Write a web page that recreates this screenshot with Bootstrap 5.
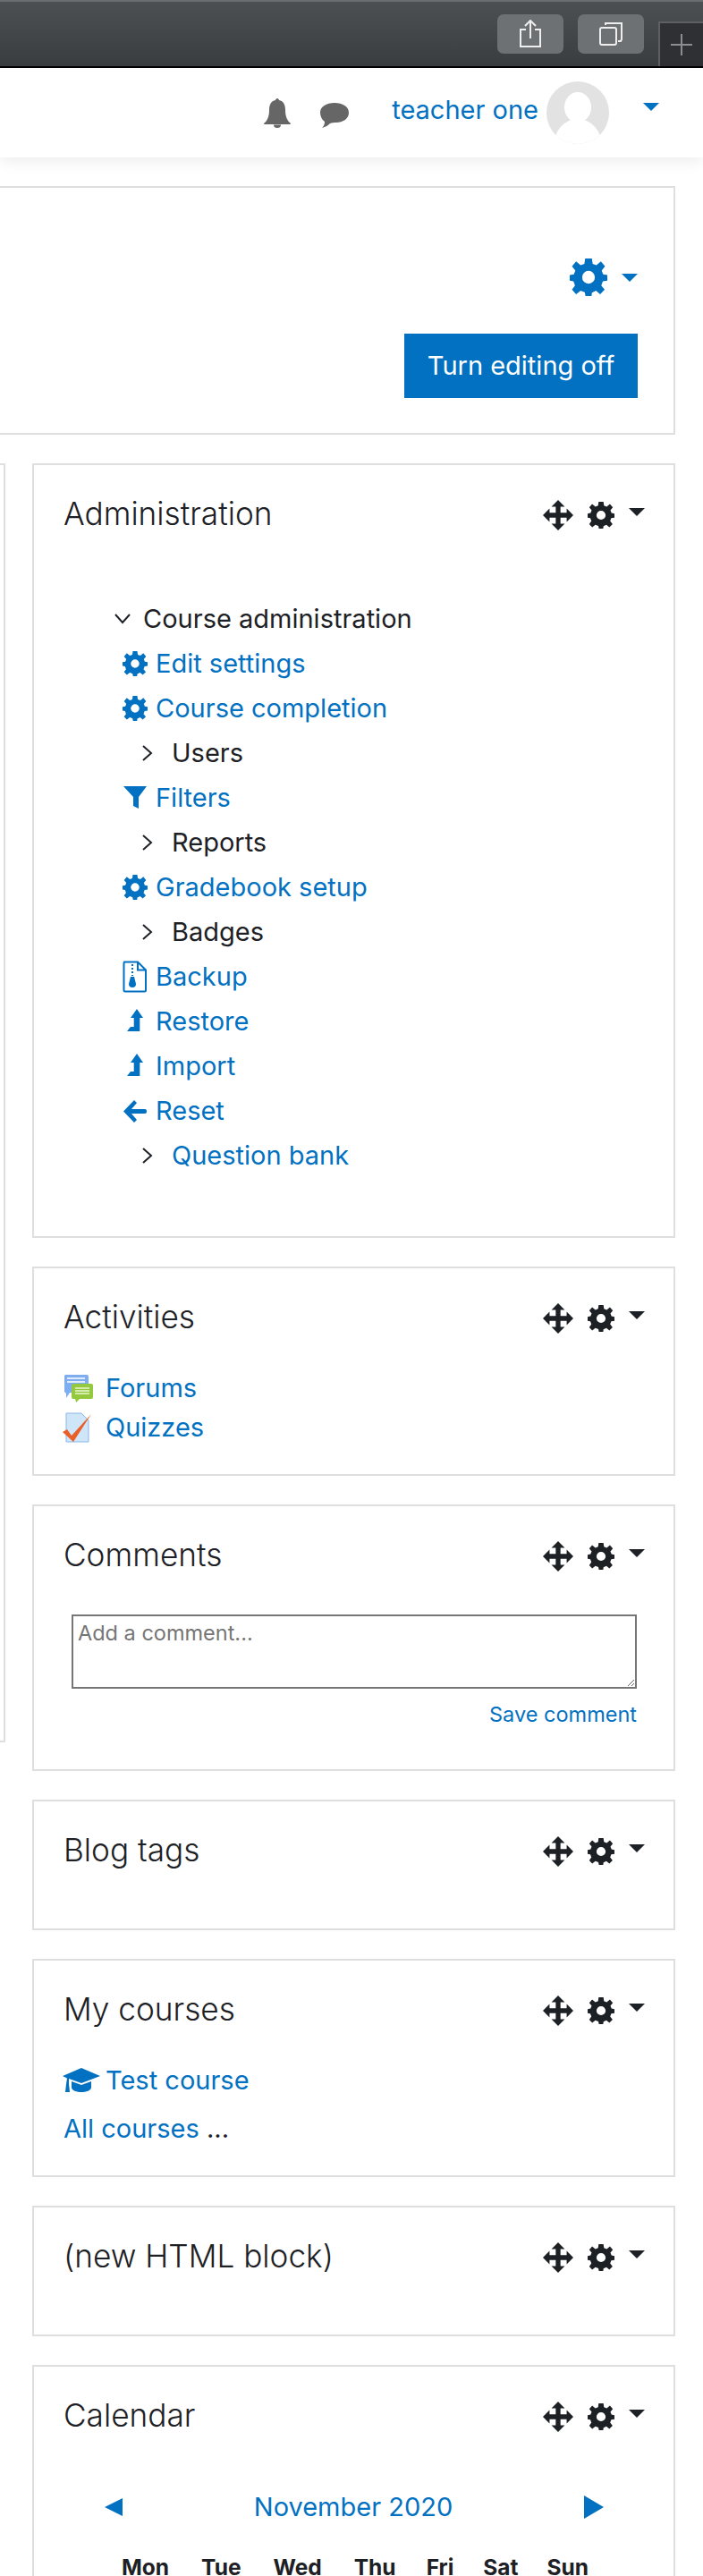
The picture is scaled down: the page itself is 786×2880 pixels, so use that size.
<!DOCTYPE html>
<html lang="en"><head><meta charset="utf-8"><title>Course</title>
<link href="https://cdn.jsdelivr.net/npm/bootstrap@5.3.0/dist/css/bootstrap.min.css" rel="stylesheet">
<style>
html,body{height:2880px;overflow:hidden;background:#fff}
body{font-family:Inter,"Noto Sans",sans-serif;font-size:29px;line-height:1.5;color:#1d2125}
a{color:#0271c1;text-decoration:none}
.topbar{height:76px;background:linear-gradient(#4c5052,#3a3d40);border-top:2px solid #6a6d6f;border-bottom:2px solid #000;padding-top:14px;gap:16px}
.tbtn{width:74px;height:44px;border-radius:7px;background:#6e7173}
.tbtn svg{width:32px;height:32px}
.ntab{width:50px;height:50px;margin-top:8px;background:#2e3033;border:2px solid #5d6062;border-right:0;border-bottom:0}
.unav{height:100px;box-shadow:0 4px 16px rgba(0,0,0,.08);padding-right:49px}
.bell{width:30px;height:33px;color:#666}
.chat{width:32px;height:28px;color:#666;margin-left:33px;margin-top:5px}
.uname{margin-left:48px;margin-bottom:6px}
.avatar{width:70px;height:70px;margin-left:9px}
.cr{width:0;height:0;border-left:9px solid transparent;border-right:9px solid transparent;border-top:9px solid currentColor;display:inline-block}
.crblue{color:#0271c1}
.ucr{margin-left:38px;margin-bottom:14px}
.bord{border:2px solid #dfdfdf}
.headbox{margin:32px 31px 0 -4px;height:278px;padding:79px 40px 0 0}
.gearb{width:42px;height:42px;color:#0271c1}
.mbtn{background:#0271c1;color:#fff;width:261px;height:72px;border:0;border-radius:0;font-size:29px;padding:0;margin-top:42px}
.mbtn:hover{background:#0271c1;color:#fff}
.sliver{width:6px;height:1430px;border-left:0;flex:none}
.blockcol{margin-left:30px;width:719px;flex:none}
.blk{margin-bottom:32px;padding:0 32px 0 33px}
.h-adm{height:866px}.h-act{height:234px}.h-com{height:298px}.h-emp{height:146px}.h-my{height:244px}.h-cal{height:300px}
.blk h5{font-size:35.2px;font-weight:300;line-height:40px;margin:0 0 4px}
.bhead{padding-top:34px}
.bctl{width:116px;height:34px;color:#1d2125}
.bctl .mv{width:34px;height:34px;margin-left:2px}
.bctl .gr{width:30px;height:30px;margin-left:16px}
.bctl .cr{margin-left:16px;margin-top:-8px}
.tree{list-style:none;margin:69px 0 0;padding:0;line-height:50px;white-space:nowrap}
.tree li{height:50px}
.tree svg{vertical-align:middle;overflow:visible}
.lv0{padding-left:56px}
.lv1{padding-left:66px}
.lv1 svg{width:28px;height:28px;margin-right:9px;margin-top:-4px;color:#0271c1}
.lv2{padding-left:87px}
.chev{width:14px;height:20px;margin-right:20px;margin-top:-4px}
.lv0 .chev{width:20px;height:14px;margin-right:13px}
.act{line-height:44px;height:44px}
.act svg{width:34px;height:34px;margin-right:14px;margin-left:-1px;vertical-align:middle;margin-top:-4px}
.act svg.capi{width:42px;height:28px;margin-right:6px}
.afirst{margin-top:34px}
.asecond{margin-top:10px}
.ta{width:632px;height:83px;border:2px solid #767676;margin:43px 0 0 9px;padding:5px;font-size:23.5px;line-height:28px;color:#777;font-family:inherit;display:block;resize:both}
.save{font-size:23.5px;line-height:30px;width:632px;margin:14px 0 0 9px}
.calh{height:40px;padding:0 46px 0 46px;margin-top:59px}
.wk{font-weight:700;font-size:24.500px;line-height:40px;margin-top:27px;padding-left:65px;gap:36px}
.wk span:nth-child(5){margin-left:-2px}
.wk span:nth-child(6){margin-left:-3px}
.wk span:nth-child(7){margin-left:-4px}
</style></head><body>
<svg width="0" height="0" class="d-block position-absolute"><defs>
<symbol id="gear" viewBox="-50 -50 100 100"><path fill-rule="evenodd" d="M-9-50H9L11-36 21-32 33-42 44-29 35-18 39-8 50-6V9L38 11 34 22 43 33 31 45 20 36 9 41 8 50H-8L-10 40-21 36-33 45-44 33-36 22-40 11-50 9V-6L-39-8-35-18-44-29-33-42-21-32-11-36ZM0-17A17 17 0 1 0 0 17 17 17 0 1 0 0-17Z"/></symbol>
<symbol id="move" viewBox="0 0 32 32"><path d="M16 0l7 7h-4.500v6.500H25V9l7 7-7 7v-4.500h-6.500V25H23l-7 7-7-7h4.500v-6.500H7V23l-7-7 7-7v4.500h6.500V7H9z"/></symbol>
<symbol id="up" viewBox="0 0 28 28"><path d="M16 0L23 10H19.300V25H5L9 20H12.700V10H9z"/></symbol>
</defs></svg>
<div class="topbar d-flex justify-content-end">
<div class="tbtn d-flex align-items-center justify-content-center"><svg viewBox="0 0 32 32" fill="none" stroke="#eee" stroke-width="2"><path d="M11 11H5v19h22V11h-6M16 21V1M10 7l6-6 6 6"/></svg></div>
<div class="tbtn d-flex align-items-center justify-content-center"><svg viewBox="0 0 32 32" fill="none" stroke="#eee" stroke-width="2"><rect x="4" y="9" width="18" height="19" rx="2"/><path d="M10 6V4h18v18l-1 2h-3"/></svg></div>
<div class="ntab d-flex align-items-center justify-content-center"><svg width="24" height="24" viewBox="0 0 24 24" stroke="#8b8d8f" stroke-width="2"><path d="M12 0v24M0 12h24"/></svg></div>
</div>
<nav class="unav d-flex justify-content-end align-items-center bg-white position-relative">
<svg class="bell" viewBox="0 0 30 33" fill="currentColor"><path d="M15 0c1 0 2 1 2 2 5 1 7 5 7 11 0 7 2 12 6 15 0 1-1 1-1 1H1s-1 0-1-1c4-3 6-8 6-15C6 7 8 3 13 2c0-1 1-2 2-2zM11 29.500h8a4 3.500 0 0 1-8 0z"/></svg>
<svg class="chat" viewBox="0 0 32 28" fill="currentColor"><path d="M16 0c9 0 16 4 16 11s-7 11-14 11c-3 0-5 0-7 1-2 2-5 4-9 5 2-2 3-4 3-7-3-2-5-6-5-10C0 4 7 0 16 0z"/></svg>
<a class="uname" href="#">teacher one</a>
<svg class="avatar" viewBox="0 0 70 70"><defs><clipPath id="cav"><circle cx="35" cy="35" r="35"/></clipPath></defs><circle cx="35" cy="35" r="35" fill="#e2e2e2"/><g clip-path="url(#cav)" fill="#fff"><ellipse cx="35" cy="29" rx="15" ry="17"/><ellipse cx="35" cy="72" rx="27" ry="30"/></g></svg>
<span class="cr crblue ucr"></span>
</nav>
<div class="headbox bord d-flex flex-column align-items-end bg-white">
<div class="d-flex align-items-center"><svg class="gearb"><use href="#gear" fill="currentColor"/></svg><span class="cr crblue ms-3"></span></div>
<button class="btn mbtn">Turn editing off</button>
</div>
<div class="d-flex mt-4 pt-2">
<div class="sliver bord"></div>
<div class="blockcol">
<section class="blk bord h-adm">
<div class="bhead d-flex justify-content-between align-items-center"><h5>Administration</h5><div class="bctl d-flex align-items-center"><svg class="mv"><use href="#move" fill="currentColor"/></svg><svg class="gr"><use href="#gear" fill="currentColor"/></svg><span class="cr"></span></div></div>
<ul class="tree">
<li class="lv0"><svg class="chev" viewBox="0 0 20 14" fill="none" stroke="#1d2125" stroke-width="2"><path d="M2 2l8 9 8-9"/></svg>Course administration</li>
<li class="lv1"><svg><use href="#gear" fill="currentColor"/></svg><a href="#">Edit settings</a></li>
<li class="lv1"><svg><use href="#gear" fill="currentColor"/></svg><a href="#">Course completion</a></li>
<li class="lv2"><svg class="chev" viewBox="0 0 14 20" fill="none" stroke="#1d2125" stroke-width="2"><path d="M2 2l9 8-9 8"/></svg>Users</li>
<li class="lv1"><svg viewBox="0 0 28 28" fill="currentColor"><path d="M1 1h26L18 13v13l-6-3V13z"/></svg><a href="#">Filters</a></li>
<li class="lv2"><svg class="chev" viewBox="0 0 14 20" fill="none" stroke="#1d2125" stroke-width="2"><path d="M2 2l9 8-9 8"/></svg>Reports</li>
<li class="lv1"><svg><use href="#gear" fill="currentColor"/></svg><a href="#">Gradebook setup</a></li>
<li class="lv2"><svg class="chev" viewBox="0 0 14 20" fill="none" stroke="#1d2125" stroke-width="2"><path d="M2 2l9 8-9 8"/></svg>Badges</li>
<li class="lv1"><svg viewBox="0 0 28 28" fill="none" stroke="currentColor" stroke-width="2"><path d="M2 -2.500H17L26 6.500V29A1.500 1.500 0 0 1 24.500 30.500H3A1.500 1.500 0 0 1 1.500 29V-1zM17 -2.500V6.500H26"/><path d="M11 0V13" stroke-dasharray="2 2"/><path d="M9 14h4l2 8a4 4 0 1 1-8 0z" fill="currentColor" stroke="none"/></svg><a href="#">Backup</a></li>
<li class="lv1"><svg><use href="#up" fill="currentColor"/></svg><a href="#">Restore</a></li>
<li class="lv1"><svg><use href="#up" fill="currentColor"/></svg><a href="#">Import</a></li>
<li class="lv1"><svg viewBox="0 0 28 28" fill="currentColor"><path d="M13 2l3 3-6 7h15a2 2 0 0 1 2 2v1a2 2 0 0 1-2 2H10l6 7-3 3L1 14.500z"/></svg><a href="#">Reset</a></li>
<li class="lv2"><svg class="chev" viewBox="0 0 14 20" fill="none" stroke="#1d2125" stroke-width="2"><path d="M2 2l9 8-9 8"/></svg><a href="#">Question bank</a></li>
</ul>
</section>
<section class="blk bord h-act">
<div class="bhead d-flex justify-content-between align-items-center"><h5>Activities</h5><div class="bctl d-flex align-items-center"><svg class="mv"><use href="#move" fill="currentColor"/></svg><svg class="gr"><use href="#gear" fill="currentColor"/></svg><span class="cr"></span></div></div>
<div class="act afirst"><svg viewBox="0 0 34 34"><path d="M3 2h24a2 2 0 0 1 2 2v18H8l-4 6V23l-2-2V3z" fill="#7eaef0"/><path d="M5 6h20M5 10h20" stroke="#fff" stroke-width="1.500"/><rect x="10" y="12" width="24" height="17" rx="2" fill="#94c83e"/><path d="M14 28h6l-5 5z" fill="#94c83e"/><path d="M14 17h16M14 20h16M14 23h16" stroke="#e9f6d0" stroke-width="1.500"/></svg><a href="#">Forums</a></div>
<div class="act"><svg viewBox="0 0 34 34"><path d="M4 1h17l8 8v24H4z" fill="#cfe5f8" stroke="#8ab8ea"/><path d="M0 22l5-3 5 7L32 2 12 33z" fill="#ea5f27"/></svg><a href="#">Quizzes</a></div>
</section>
<section class="blk bord h-com">
<div class="bhead d-flex justify-content-between align-items-center"><h5>Comments</h5><div class="bctl d-flex align-items-center"><svg class="mv"><use href="#move" fill="currentColor"/></svg><svg class="gr"><use href="#gear" fill="currentColor"/></svg><span class="cr"></span></div></div>
<textarea class="ta" placeholder="Add a comment..."></textarea>
<div class="save text-end"><a href="#">Save comment</a></div>
</section>
<section class="blk bord h-emp">
<div class="bhead d-flex justify-content-between align-items-center"><h5>Blog tags</h5><div class="bctl d-flex align-items-center"><svg class="mv"><use href="#move" fill="currentColor"/></svg><svg class="gr"><use href="#gear" fill="currentColor"/></svg><span class="cr"></span></div></div>
</section>
<section class="blk bord h-my">
<div class="bhead d-flex justify-content-between align-items-center"><h5>My courses</h5><div class="bctl d-flex align-items-center"><svg class="mv"><use href="#move" fill="currentColor"/></svg><svg class="gr"><use href="#gear" fill="currentColor"/></svg><span class="cr"></span></div></div>
<div class="act afirst"><svg class="capi" viewBox="0 0 42 28"><path d="M0 9L21 0 42 9 21 17 7 12V18L8 27H3L4 18 5 11.500z" fill="#0271c1"/><path d="M10 15L21 19 32 15V22C32 25 26 27 21 27S10 25 10 22z" fill="#0271c1"/></svg><a href="#">Test course</a></div>
<div class="act asecond"><a href="#">All courses</a> ...</div>
</section>
<section class="blk bord h-emp">
<div class="bhead d-flex justify-content-between align-items-center"><h5>(new HTML block)</h5><div class="bctl d-flex align-items-center"><svg class="mv"><use href="#move" fill="currentColor"/></svg><svg class="gr"><use href="#gear" fill="currentColor"/></svg><span class="cr"></span></div></div>
</section>
<section class="blk bord h-cal">
<div class="bhead d-flex justify-content-between align-items-center"><h5>Calendar</h5><div class="bctl d-flex align-items-center"><svg class="mv"><use href="#move" fill="currentColor"/></svg><svg class="gr"><use href="#gear" fill="currentColor"/></svg><span class="cr"></span></div></div>
<div class="calh d-flex justify-content-between align-items-center"><svg width="20" height="20" viewBox="0 0 20 20"><path d="M20 0v20L0 10z" fill="#0271c1"/></svg><a href="#">November 2020</a><svg width="22" height="26" viewBox="0 0 22 26"><path d="M0 0v26l22-13z" fill="#0271c1"/></svg></div>
<div class="wk d-flex"><span>Mon</span><span>Tue</span><span>Wed</span><span>Thu</span><span>Fri</span><span>Sat</span><span>Sun</span></div>
</section>
</div></div>
</body></html>
